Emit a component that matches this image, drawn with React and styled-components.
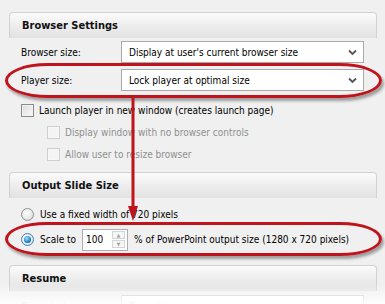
import React from 'react';
import styled, { createGlobalStyle } from 'styled-components';

const GlobalStyle = createGlobalStyle`
  html, body {
    margin: 0;
    padding: 0;
    background: #f0f0f0;
  }
  body {
    font-family: "DejaVu Sans Condensed", "DejaVu Sans", sans-serif;
    font-size: 10px;
    color: #000;
  }
`;

const Page = styled.div`
  position: relative;
  width: 385px;
  height: 304px;
  overflow: hidden;
  background: #f0f0f0;
  box-sizing: border-box;
  padding: 12px 8px 0 9px;
`;

const Section = styled.div`
  display: flex;
  flex-direction: column;
  margin-bottom: ${({ gap }) => gap || 0}px;
`;

const Header = styled.div`
  height: 25px;
  display: flex;
  align-items: center;
  padding-left: 12px;
  border: 1px solid #d2d2d2;
  border-bottom: none;
  border-radius: 4px 4px 0 0;
  background: linear-gradient(#fbfbfb, #ececec 55%, #e2e2e2);
  font-weight: bold;
  font-size: 11px;
  color: #111;
`;

const Body = styled.div`
  display: flex;
  flex-direction: column;
  padding: ${({ top }) => top ?? 3}px 13px 0 12px;
`;

const FieldRow = styled.div`
  display: grid;
  grid-template-columns: 100px 1fr;
  align-items: center;
  height: 22px;
  margin-bottom: ${({ gap }) => gap || 0}px;
  color: ${({ faded }) => (faded ? '#a0a0a0' : '#000')};
`;

const Select = styled.div`
  height: 22px;
  box-sizing: border-box;
  border: 1px solid ${({ faded }) => (faded ? '#c4c4c4' : '#a9a9a9')};
  background: #fff;
  display: flex;
  align-items: center;
  justify-content: space-between;
  padding: 0 6px 0 7px;
  color: ${({ faded }) => (faded ? '#a8a8a8' : '#000')};
`;

const Chevron = () => (
  <svg width="9" height="7" viewBox="0 0 9 7">
    <path d="M1 1.5 L4.5 5 L8 1.5" fill="none" stroke="#555" strokeWidth="1.8" />
  </svg>
);

const CheckRow = styled.div`
  display: flex;
  align-items: center;
  height: 22px;
  padding-left: ${({ indent }) => (indent ? 26 : 0)}px;
  color: ${({ disabled }) => (disabled ? '#8f8f8f' : '#000')};
  gap: 5px;
`;

const Box = styled.span`
  width: 13px;
  height: 13px;
  box-sizing: border-box;
  border: 1px solid ${({ disabled }) => (disabled ? '#cfcfcf' : '#8a8a8a')};
  background: ${({ disabled }) =>
    disabled ? '#f4f4f4' : 'linear-gradient(135deg, #dcdcdc, #fafafa)'};
  box-shadow: inset 0 0 0 1px ${({ disabled }) => (disabled ? '#f7f7f7' : '#f2f2f2')};
`;

const RadioRow = styled.div`
  display: flex;
  align-items: center;
  height: 25px;
  gap: 6px;
`;

const Radio = styled.span`
  width: 13px;
  height: 13px;
  box-sizing: border-box;
  border-radius: 50%;
  border: 1px solid ${({ checked }) => (checked ? '#3c7fb1' : '#8e8f8f')};
  background: radial-gradient(circle at 40% 35%, #ffffff, #d6d6d6);
  display: flex;
  align-items: center;
  justify-content: center;
  &::after {
    content: '';
    display: ${({ checked }) => (checked ? 'block' : 'none')};
    width: 7px;
    height: 7px;
    border-radius: 50%;
    background: radial-gradient(circle at 40% 35%, #9ee3ff, #1b7fcc 60%, #0d5a9a);
  }
`;

const Spinner = styled.div`
  display: flex;
  align-items: center;
  width: 46px;
  height: 22px;
  box-sizing: border-box;
  border: 1px solid #abadb3;
  background: #fff;
  padding: 0 2px 0 3px;
  justify-content: space-between;
`;

const SpinButtons = styled.div`
  display: flex;
  flex-direction: column;
  gap: 1px;
`;

const SpinBtn = styled.span`
  width: 13px;
  height: 8px;
  box-sizing: border-box;
  border: 1px solid #d4d4d4;
  background: #f6f6f6;
  display: flex;
  align-items: center;
  justify-content: center;
  font-size: 5px;
  color: #a0a0a0;
  line-height: 1;
`;

const Callout = styled.div`
  position: absolute;
  left: ${({ x }) => x}px;
  top: ${({ y }) => y}px;
  width: ${({ w }) => w}px;
  height: ${({ h }) => h}px;
  box-sizing: border-box;
  border: 3px solid #c0141c;
  border-radius: 44px / 18px;
  box-shadow: 2px 3px 3px rgba(0, 0, 0, 0.35);
  pointer-events: none;
`;

const Arrow = styled.svg`
  position: absolute;
  left: 127px;
  top: 96px;
`;

const Fade = styled.div`
  position: absolute;
  left: 0;
  right: 0;
  bottom: 0;
  height: 20px;
  background: linear-gradient(rgba(255, 255, 255, 0), rgba(255, 255, 255, 0.9));
`;

export default function App() {
  return (
    <>
      <GlobalStyle />
      <Page>
        <Section gap={7}>
          <Header>Browser Settings</Header>
          <Body>
            <FieldRow gap={6}>
              <span>Browser size:</span>
              <Select>
                Display at user's current browser size
                <Chevron />
              </Select>
            </FieldRow>
            <FieldRow gap={8}>
              <span>Player size:</span>
              <Select>
                Lock player at optimal size
                <Chevron />
              </Select>
            </FieldRow>
            <CheckRow>
              <Box />
              Launch player in new window (creates launch page)
            </CheckRow>
            <CheckRow indent disabled>
              <Box disabled />
              Display window with no browser controls
            </CheckRow>
            <CheckRow indent disabled>
              <Box disabled />
              Allow user to resize browser
            </CheckRow>
          </Body>
        </Section>

        <Section gap={13}>
          <Header>Output Slide Size</Header>
          <Body top={3}>
            <RadioRow style={{ marginTop: 1 }}>
              <Radio />
              Use a fixed width of 720 pixels
            </RadioRow>
            <RadioRow>
              <Radio checked />
              Scale to
              <Spinner>
                100
                <SpinButtons>
                  <SpinBtn>▲</SpinBtn>
                  <SpinBtn>▼</SpinBtn>
                </SpinButtons>
              </Spinner>
              % of PowerPoint output size (1280 x 720 pixels)
            </RadioRow>
          </Body>
        </Section>

        <Section>
          <Header>Resume</Header>
          <Body top={4}>
            <FieldRow faded>
              <span>On restart:</span>
              <Select faded>
                Prompt to resume
                <Chevron />
              </Select>
            </FieldRow>
          </Body>
        </Section>

        <Callout x={5} y={63} w={377} h={35} />
        <Callout x={5} y={222} w={377} h={34} />
        <Arrow width="12" height="128" viewBox="0 0 12 128">
          <line x1="6" y1="0" x2="6" y2="114" stroke="#c0141c" strokeWidth="3" />
          <path d="M1 110 L11 110 L6 125 Z" fill="#c0141c" />
        </Arrow>
        <Fade />
      </Page>
    </>
  );
}
